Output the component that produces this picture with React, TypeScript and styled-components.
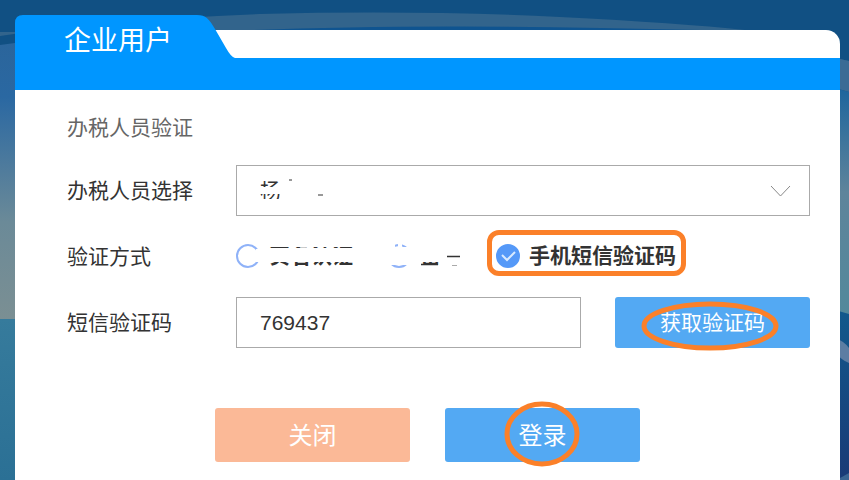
import React from "react";
import styled, { createGlobalStyle, css } from "styled-components";

const GlobalStyle = createGlobalStyle`
  * { box-sizing: border-box; }
  body {
    margin: 0;
    background: #115083;
    color: #333;
    font-family: "Liberation Sans", "Noto Sans CJK SC", sans-serif;
    font-size: 21px;
  }
  button, input, select { font: inherit; }
`;

const Page = styled.div`
  position: relative;
  isolation: isolate;
  min-height: 100vh;
  display: flex;
  flex-direction: column;
  padding: 15px 9px 0 15px;
  overflow: hidden;
`;

const Scenery = styled.svg`
  position: absolute;
  inset: 0;
  z-index: -1;
  width: 100%;
  height: 100%;
`;

const Dialog = styled.main`
  flex: 1;
  display: flex;
  flex-direction: column;
`;

const TabStrip = styled.header`
  display: flex;
  align-items: flex-end;
  border-bottom: 32px solid #0096ff;
`;

const Tab = styled.h1`
  position: relative;
  z-index: 1;
  width: 220px;
  height: 43px;
  margin: 0;
  padding-left: 49px;
  color: #fff;
  font-size: 27px;
  font-weight: 400;
  line-height: 52px;
`;

const TabShape = styled.svg`
  position: absolute;
  inset: 0;
  z-index: -1;
`;

const StripRest = styled.div`
  flex: 1;
  height: 28px;
  margin-left: -30px;
  border-top-right-radius: 14px;
  background: #fff;
`;

const Form = styled.form`
  flex: 1;
  padding: 22px 30px 18px 52px;
  background: #fff;
`;

const Title = styled.h2`
  margin: 0 0 21px;
  color: #666;
  font-size: 21px;
  font-weight: 400;
  line-height: 32px;
`;

const Row = styled.div<{ $tall?: boolean }>`
  display: grid;
  grid-template-columns: 169px 1fr;
  align-items: center;
  min-height: ${(p) => (p.$tall ? 81 : 51)}px;
`;

const RowLabel = styled.label`
  line-height: 32px;
`;

const fieldBox = css`
  width: 100%;
  height: 51px;
  padding: 0 23px;
  border: 1px solid #aaa;
  border-radius: 0;
  background: #fff;
  color: #333;
  outline: none;
`;

const SelectWrap = styled.div`
  position: relative;
`;

const Select = styled.select`
  ${fieldBox}
  appearance: none;
`;

const Chevron = styled.svg`
  position: absolute;
  top: 19px;
  right: 18px;
  pointer-events: none;
`;

const CodeFields = styled.div`
  display: grid;
  grid-template-columns: 1fr 195px;
  gap: 34px;
`;

const CodeInput = styled.input`
  ${fieldBox}
`;

const Options = styled.div`
  display: flex;
  gap: 34px;
  padding-bottom: 2px;
`;

const Option = styled.label`
  position: relative;
  display: flex;
  align-items: center;
  gap: 9px;
  height: 32px;
  font-weight: 700;
  line-height: 28px;
  white-space: nowrap;
`;

const Radio = styled.input`
  appearance: none;
  width: 24px;
  height: 24px;
  margin: 0;
  border: 2px solid #8fb2f8;
  border-radius: 50%;
  &:checked {
    border-color: #5599f8;
    background: #5599f8;
  }
`;

const Tick = styled.svg`
  position: absolute;
  left: 0;
  top: 4px;
  pointer-events: none;
`;

const Eraser = styled.svg`
  position: absolute;
  left: 0;
  top: 0;
  pointer-events: none;
`;

const Highlight = styled.span`
  position: absolute;
  inset: -10px -10px -4px -9px;
  border: 5px solid #fb8029;
  border-radius: 12px;
  pointer-events: none;
`;

const Button = styled.button<{ $tone?: "peach"; $large?: boolean }>`
  position: relative;
  width: 195px;
  height: ${(p) => (p.$large ? 54 : 51)}px;
  padding: 0 0 3px;
  border: 0;
  border-radius: 3px;
  background: ${(p) => (p.$tone === "peach" ? "#fbb997" : "#53a9f3")};
  color: #fff;
  font-size: ${(p) => (p.$large ? 24 : 21)}px;
  cursor: pointer;
`;

const Ring = styled.svg`
  position: absolute;
  left: 0;
  top: -8px;
  overflow: visible;
  pointer-events: none;
`;

const Actions = styled.div`
  display: flex;
  justify-content: center;
  gap: 35px;
  margin-top: 60px;
  /* balances the uneven side padding so the pair centres on the dialog */
  margin-left: -22px;
`;

function Backdrop() {
  return (
    <Scenery viewBox="0 0 849 480" preserveAspectRatio="none" aria-hidden="true">
      <defs>
        <linearGradient id="leftSky" x1="0" y1="0" x2="0" y2="1">
          <stop offset="0" stopColor="#2b659b" />
          <stop offset="0.2" stopColor="#2a68a2" />
          <stop offset="0.65" stopColor="#6b8a98" />
          <stop offset="1" stopColor="#7b8f93" />
        </linearGradient>
        <linearGradient id="leftSea" x1="0" y1="0" x2="0" y2="1">
          <stop offset="0" stopColor="#367b9c" />
          <stop offset="1" stopColor="#2b7095" />
        </linearGradient>
        <linearGradient id="rightSky" x1="0" y1="0" x2="0" y2="1">
          <stop offset="0" stopColor="#1d659d" />
          <stop offset="0.45" stopColor="#5e849b" />
          <stop offset="1" stopColor="#52899b" />
        </linearGradient>
        <linearGradient id="rightSea" x1="0" y1="0" x2="0" y2="1">
          <stop offset="0" stopColor="#12598c" />
          <stop offset="1" stopColor="#193a76" />
        </linearGradient>
      </defs>
      <rect width="849" height="480" fill="#115083" />
      <path d="M0 36Q100 20 260 14Q420 10 560 17Q680 23 745 30L849 60V80L700 32H0Z" fill="#32648c" />
      <path d="M210 32Q400 22 700 30V34H210Z" fill="#0f5490" />
      <path d="M0 45L30 41V320H0Z" fill="url(#leftSky)" />
      <rect y="319" width="30" height="161" fill="url(#leftSea)" />
      <path d="M835 30H849V61L835 58Z" fill="#115083" />
      <path d="M835 58L849 61V92L835 88Z" fill="#3b6b95" />
      <path d="M835 88L849 92V320H835Z" fill="url(#rightSky)" />
      <path d="M835 310L849 314V480H835Z" fill="url(#rightSea)" />
      <path d="M835 338Q844 341 849 348V363Q841 360 835 352Z" fill="#5c7da3" />
      <path d="M840 478L849 473V480H840Z" fill="#3a6592" />
    </Scenery>
  );
}

export default function App() {
  return (
    <>
      <GlobalStyle />
      <Page>
        <Backdrop />
        <Dialog>
          <TabStrip>
            <Tab>
              <TabShape width="220" height="44" aria-hidden="true">
                <path d="M0 44V8Q0 0 8 0H182C191 0 194 4 200 14L211 33Q216 42 220 43V44Z" fill="#0096ff" />
              </TabShape>
              企业用户
            </Tab>
            <StripRest />
          </TabStrip>
          <Form onSubmit={(e) => e.preventDefault()}>
            <Title>办税人员验证</Title>
            <Row>
              <RowLabel htmlFor="staff">办税人员选择</RowLabel>
              <SelectWrap>
                <Select id="staff" defaultValue="yang">
                  <option value="yang">杨</option>
                </Select>
                <Eraser width="100" height="50" aria-hidden="true">
                  <path d="M22 9H50V16H22ZM22 22H50V29H22ZM22 34H50V40H22Z" fill="#fff" />
                  <path d="M53 15h3M82 30h5" stroke="#333" />
                </Eraser>
                <Chevron width="22" height="14" fill="none" stroke="#888" aria-hidden="true">
                  <path d="M1 2L10.500 12L20 2" />
                </Chevron>
              </SelectWrap>
            </Row>
            <Row $tall role="radiogroup" aria-labelledby="method">
              <RowLabel as="span" id="method">验证方式</RowLabel>
              <Options>
                <Option>
                  <Radio type="radio" name="method" />
                  实名认证
                  <Eraser width="120" height="32" aria-hidden="true">
                    <path d="M20 9H28L25 22H20ZM30 0H120V7H30ZM30 8H120V22H30ZM30 26H120V32H30Z" fill="#fff" />
                  </Eraser>
                </Option>
                <Option>
                  <Radio type="radio" name="method" />
                  密码
                  <Eraser width="78" height="32" aria-hidden="true">
                    <path d="M0 7H28V25H0ZM0 0H8V8H0ZM11 0H15V8H11ZM28 0H78V22H28ZM52 20H78V32H52ZM28 25H78V32H28Z" fill="#fff" />
                    <path d="M34 24.500H51M60 16.500H73" stroke="#333" strokeWidth="1.500" />
                    <path d="M65 25.500h5" stroke="#aaa" />
                  </Eraser>
                </Option>
                <Option>
                  <Radio type="radio" name="method" defaultChecked />
                  手机短信验证码
                  <Tick width="24" height="24" fill="none" stroke="#d8eaff" strokeWidth="2" aria-hidden="true">
                    <path d="M6 11L11 16L19 8" />
                  </Tick>
                  <Highlight />
                </Option>
              </Options>
            </Row>
            <Row>
              <RowLabel htmlFor="code">短信验证码</RowLabel>
              <CodeFields>
                <CodeInput id="code" defaultValue="769437" />
                <Button type="button">
                  获取验证码
                  <Ring width="195" height="70" fill="none" stroke="#fb8029" strokeWidth="5" aria-hidden="true">
                    <ellipse cx="95" cy="37" rx="66" ry="22" />
                  </Ring>
                </Button>
              </CodeFields>
            </Row>
            <Actions>
              <Button type="button" $tone="peach" $large>关闭</Button>
              <Button type="submit" $large>
                登录
                <Ring width="195" height="70" fill="none" stroke="#fb8029" strokeWidth="5" aria-hidden="true">
                  <ellipse cx="97" cy="34" rx="35" ry="30" />
                </Ring>
              </Button>
            </Actions>
          </Form>
        </Dialog>
      </Page>
    </>
  );
}
